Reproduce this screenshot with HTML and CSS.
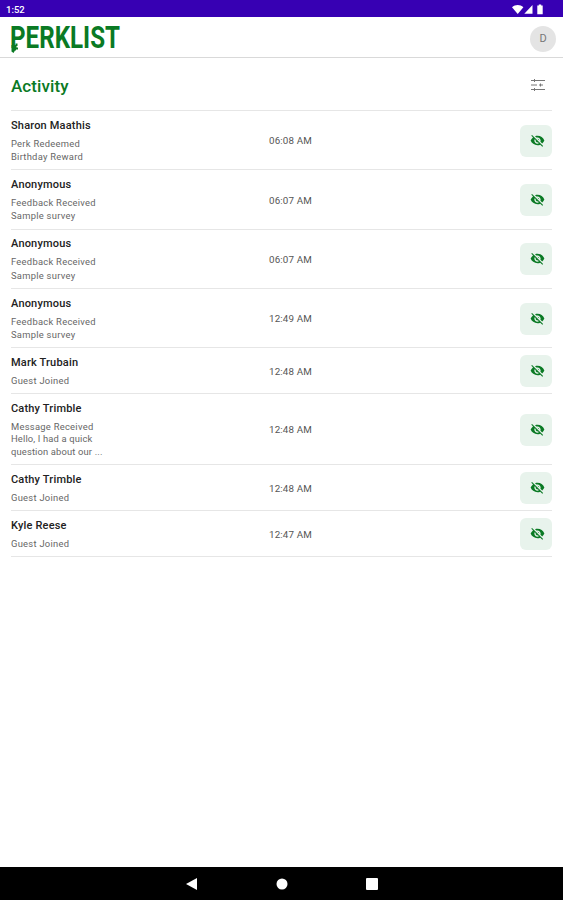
FILE: index.html
```
<!DOCTYPE html>
<html lang="en">

<head>
    <meta charset="utf-8">
    <title>Perklist - Activity</title>
    <link rel="stylesheet" href="styles.css">
</head>

<body>
    <!-- Icons used more than once -->
    <svg class="sprite" aria-hidden="true">
        <symbol id="hidden-icon" viewBox="0 0 24 24">
            <path d="M12 7c2.76 0 5 2.24 5 5 0 .65-.13 1.26-.36 1.83l2.92 2.92c1.51-1.26 2.7-2.89 3.43-4.75-1.73-4.39-6-7.5-11-7.5-1.4 0-2.74.25-3.98.7l2.16 2.16C10.74 7.13 11.35 7 12 7zM2 4.27l2.28 2.28.46.46C3.08 8.3 1.78 10.02 1 12c1.73 4.39 6 7.5 11 7.5 1.55 0 3.03-.3 4.38-.84l.42.42L19.73 22 21 20.73 3.27 3 2 4.27zM7.53 9.8l1.55 1.55c-.05.21-.08.43-.08.65 0 1.66 1.34 3 3 3 .22 0 .44-.03.65-.08l1.55 1.55c-.67.33-1.41.53-2.2.53-2.76 0-5-2.24-5-5 0-.79.2-1.53.53-2.2zm4.31-.78l3.15 3.15.02-.16c0-1.66-1.34-3-3-3l-.17.01z"/>
        </symbol>
    </svg>

    <div class="status-bar">
        <span>1:52</span>
        <svg class="status-icons" width="33" height="11" viewBox="0 0 33 11">
            <path d="M0 3.200C3.200.2 8.200.2 11.400 3.200L5.700 10z"/>
            <path d="M12.300 9.800L20.500 1v8.800z"/>
            <path d="M25.300 1.500h1.500V.5h2.400v1h1.500v8.700h-5.400z"/>
        </svg>
    </div>

    <header class="header">
        <svg class="logo" width="116" height="36" viewBox="0 0 116 36">
            <text x="0" y="27" textLength="110" lengthAdjust="spacingAndGlyphs">PERKLIST</text>
            <!-- key bit under the P -->
            <path d="M1.500 24h4v-1.500h2v2.500h-1v1.500h1.500v2h-2v1h-1L3.500 32l-2-1.500z"/>
        </svg>
        <div class="avatar">D</div>
    </header>

    <main>
        <div class="title-row">
            <h1>Activity</h1>
            <svg class="filter" width="14" height="12" viewBox="0 0 14 12">
                <path d="M0 1.500h14M0 6h6M8 6h4M0 10.500h14M3.500 0v3M9.500 4.500v3M3.500 9v3"/>
            </svg>
        </div>

        <ul class="activity">
            <li>
                <div class="info">
                    <h2>Sharon Maathis</h2>
                    <p>Perk Redeemed</p>
                    <p>Birthday Reward</p>
                </div>
                <time>06:08 AM</time>
                <button aria-label="Hide"><svg><use href="#hidden-icon"/></svg></button>
            </li>
            <li>
                <div class="info">
                    <h2>Anonymous</h2>
                    <p>Feedback Received</p>
                    <p>Sample survey</p>
                </div>
                <time>06:07 AM</time>
                <button aria-label="Hide"><svg><use href="#hidden-icon"/></svg></button>
            </li>
            <li>
                <div class="info">
                    <h2>Anonymous</h2>
                    <p>Feedback Received</p>
                    <p>Sample survey</p>
                </div>
                <time>06:07 AM</time>
                <button aria-label="Hide"><svg><use href="#hidden-icon"/></svg></button>
            </li>
            <li>
                <div class="info">
                    <h2>Anonymous</h2>
                    <p>Feedback Received</p>
                    <p>Sample survey</p>
                </div>
                <time>12:49 AM</time>
                <button aria-label="Hide"><svg><use href="#hidden-icon"/></svg></button>
            </li>
            <li>
                <div class="info">
                    <h2>Mark Trubain</h2>
                    <p>Guest Joined</p>
                </div>
                <time>12:48 AM</time>
                <button aria-label="Hide"><svg><use href="#hidden-icon"/></svg></button>
            </li>
            <li>
                <div class="info">
                    <h2>Cathy Trimble</h2>
                    <p>Message Received</p>
                    <p class="message">Hello, I had a quick<br>question about our ...</p>
                </div>
                <time>12:48 AM</time>
                <button aria-label="Hide"><svg><use href="#hidden-icon"/></svg></button>
            </li>
            <li>
                <div class="info">
                    <h2>Cathy Trimble</h2>
                    <p>Guest Joined</p>
                </div>
                <time>12:48 AM</time>
                <button aria-label="Hide"><svg><use href="#hidden-icon"/></svg></button>
            </li>
            <li>
                <div class="info">
                    <h2>Kyle Reese</h2>
                    <p>Guest Joined</p>
                </div>
                <time>12:47 AM</time>
                <button aria-label="Hide"><svg><use href="#hidden-icon"/></svg></button>
            </li>
        </ul>
    </main>

    <nav class="nav-bar">
        <svg width="12" height="12" viewBox="0 0 12 12"><path d="M0 6L11 0v12z"/></svg>
        <svg width="12" height="12" viewBox="0 0 12 12"><circle cx="6" cy="6" r="5.500"/></svg>
        <svg width="12" height="12" viewBox="0 0 12 12"><rect width="12" height="12" rx="1"/></svg>
    </nav>
</body>

</html>
```

FILE: styles.css
```
* {
    box-sizing: border-box;
}

body {
    display: flex;
    flex-direction: column;
    height: 100vh;
    margin: 0;
    background-color: #fff;
    font-family: Roboto, "Liberation Sans", sans-serif;
    overflow: hidden;
}

h1,
h2,
p,
ul {
    margin: 0;
    padding: 0;
}

svg {
    display: block;
}

.sprite {
    display: none;
}

.status-bar {
    display: flex;
    align-items: center;
    justify-content: space-between;
    height: 17px;
    padding: 1px 18px 0 6px;
    background-color: #3700b3;
    color: #fff;
    font-size: 9.500px;
    font-weight: 500;
}

.status-icons {
    fill: #fff;
}

.header {
    display: flex;
    align-items: center;
    justify-content: space-between;
    height: 41px;
    padding: 3px 7px 0 10px;
    border-bottom: 1px solid #d9d9d9;
}

.logo {
    overflow: visible;
    fill: #0a7a24;
    font-size: 31px;
    font-weight: 700;
}

.avatar {
    width: 26px;
    height: 26px;
    border-radius: 50%;
    background-color: #e4e4e4;
    color: #777;
    font-size: 11px;
    line-height: 26px;
    text-align: center;
}

main {
    flex: 1;
    padding: 0 11px;
}

.title-row {
    display: flex;
    align-items: center;
    justify-content: space-between;
    height: 52px;
    padding: 2px 7px 0 0;
}

h1 {
    padding-top: 1px;
    color: #0a7a24;
    font-size: 17px;
    font-weight: 500;
    letter-spacing: 0.1px;
}

.filter {
    fill: none;
    stroke: #777;
    stroke-width: 1;
}

.activity {
    list-style: none;
    border-top: 1px solid #e6e6e6;
}

.activity li {
    display: grid;
    grid-template-columns: 258px 1fr 32px;
    align-items: center;
    padding: 6.900px 0 5.700px;
    border-bottom: 1px solid #e6e6e6;
}

h2 {
    margin-bottom: 3.400px;
    color: #222;
    font-size: 11px;
    font-weight: 500;
    letter-spacing: 0.18px;
    line-height: 15.500px;
}

.info p {
    color: #666;
    font-size: 9.400px;
    letter-spacing: 0.27px;
    line-height: 13.400px;
}

.info .message {
    letter-spacing: 0.15px;
    line-height: 12.700px;
}

time {
    color: #555;
    font-size: 9.800px;
    letter-spacing: 0.15px;
}

button {
    display: flex;
    align-items: center;
    justify-content: center;
    width: 32px;
    height: 32px;
    margin: -2px 0;
    padding: 0 0 1px 2px;
    border: none;
    border-radius: 6px;
    background-color: #e8f3ec;
}

button svg {
    width: 15px;
    height: 15px;
    fill: #0a7a24;
}

.nav-bar {
    display: flex;
    align-items: center;
    justify-content: center;
    gap: 78px;
    height: 33px;
    background-color: #000;
}

.nav-bar svg {
    fill: #fff;
}
```
